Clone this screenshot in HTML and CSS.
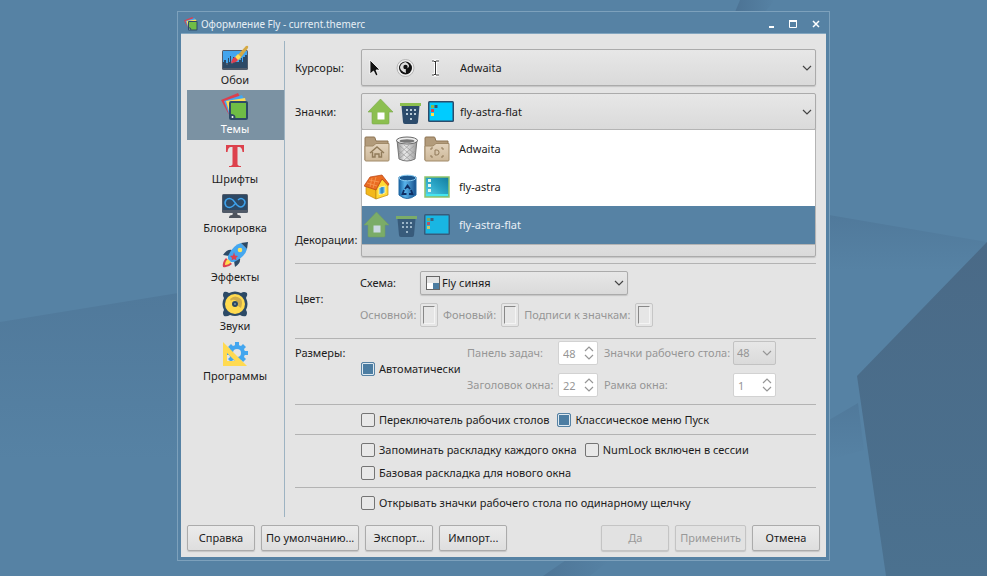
FILE: index.html
```html
<!DOCTYPE html>
<html lang="ru">
<head>
<meta charset="utf-8">
<meta name="viewport" content="width=device-width, initial-scale=1">
<title>Оформление Fly - current.themerc</title>
<link rel="stylesheet" href="styles.css">
</head>
<body>
<svg class="wallpaper" viewBox="0 0 987 576" preserveAspectRatio="none" aria-hidden="true">
  <defs>
    <linearGradient id="w1" x1="0" y1="0" x2="1" y2="0"><stop offset="0" stop-color="#46698a"/><stop offset="1" stop-color="#46698a" stop-opacity="0"/></linearGradient>
    <linearGradient id="w2" x1="0" y1="0" x2="0" y2="1"><stop offset="0" stop-color="#46698a" stop-opacity=".35"/><stop offset="1" stop-color="#46698a" stop-opacity="0"/></linearGradient>
    <linearGradient id="w3" x1="0" y1="0" x2="0" y2="1"><stop offset="0" stop-color="#4a6a87"/><stop offset="1" stop-color="#4b718f"/></linearGradient>
  </defs>
  <rect width="987" height="576" fill="#5682a4"/>
  <path d="M0 322L178 293V460L0 460z" fill="url(#w2)"/>
  <path d="M740 0H775L765 12H735z" fill="url(#w1)" opacity=".6"/>
  <path d="M829 215L987 242L975 270L829 270z" fill="url(#w2)"/>
  <path d="M829 420L858 403L864 450L829 460z" fill="url(#w2)"/>
  <path d="M987 242L857 376L886 576H987z" fill="url(#w3)"/>
  <path d="M566 560L543 576H590L610 560z" fill="url(#w1)" opacity=".5"/>
</svg>

<svg class="defs" aria-hidden="true">
  <defs>
    <linearGradient id="g-fold" x1="0" y1="0" x2="0" y2="1"><stop offset="0" stop-color="#e3d3bd"/><stop offset="1" stop-color="#cdb899"/></linearGradient>
    <linearGradient id="g-bin" x1="0" y1="0" x2="1" y2="0"><stop offset="0" stop-color="#1763a3"/><stop offset=".35" stop-color="#58b4ec"/><stop offset="1" stop-color="#174f8c"/></linearGradient>
    <linearGradient id="g-scr" x1="0" y1="1" x2="1" y2="0"><stop offset="0" stop-color="#5ed4ec"/><stop offset=".5" stop-color="#2ba5c6"/><stop offset="1" stop-color="#127b9d"/></linearGradient>
    <linearGradient id="g-can" x1="0" y1="0" x2="1" y2="0"><stop offset="0" stop-color="#8f8f8f"/><stop offset=".4" stop-color="#ececec"/><stop offset="1" stop-color="#999"/></linearGradient>
    <symbol id="i-themes" viewBox="0 0 28 28">
      <path d="M0 7L17 0L19 4L10 24L7 20z" fill="#dc3f4e"/>
      <path d="M3 8L21 2L23 6L10 24L8 21z" fill="#45a6ef"/>
      <path d="M5 8L24 5L25 9L10 25z" fill="#ffdb55"/>
      <rect x="8" y="8" width="19" height="19" rx="2" fill="#2d4a66"/>
      <path d="M10 10H25V25H14.500C14.500 22 13 21 10 21z" fill="#6fbd45"/>
      <circle cx="11.500" cy="24" r="1" fill="#fff"/>
    </symbol>
    <symbol id="i-home" viewBox="0 0 26 26">
      <path d="M12.500 0L25 13H21V24Q21 25 20 25H5Q4 25 4 24V13H0z" fill="#8cbf50" stroke="#79a84a" stroke-width=".6"/>
      <rect x="9.500" y="13.500" width="7" height="7" fill="#fff"/>
    </symbol>
    <symbol id="i-trash" viewBox="0 0 26 26">
      <rect x="2" y="4" width="21" height="3" fill="#8cbf50"/>
      <path d="M3.500 7H21.500L20 23Q20 25 18 25H7Q5 25 5 23z" fill="#2c4b6b"/>
      <path d="M8 10h2v2h-2zM12 10h2v2h-2zM16 10h2v2h-2zM8 14h2v2h-2zM12 14h2v2h-2zM16 14h2v2h-2zM12 19h2v2h-2z" fill="#b9cbd8"/>
    </symbol>
    <symbol id="i-screen" viewBox="0 0 26 26">
      <rect x="0" y="2" width="26" height="21" rx="1.500" fill="#2c4b6b"/>
      <rect x="1.500" y="3.500" width="23" height="18" fill="#00ccff"/>
      <path d="M3 6h3v3H3z" fill="#8ab84a"/><path d="M6.500 6h3v3H6.500z" fill="#31546f"/>
      <path d="M3 10h3v3H3z" fill="#df4250"/><path d="M3 14h3v3H3z" fill="#ffdf4d"/>
    </symbol>
    <symbol id="i-folder" viewBox="0 0 26 26">
      <path d="M1 24V2Q1 1 2 1H10Q11 1 11 2L12 5H24V24z" fill="#b29b7b" stroke="#8d7555"/>
      <path d="M1 10H9L12 7.500H25V24Q25 25 24 25H2Q1 25 1 24z" fill="url(#g-fold)" stroke="#a18a69"/>
    </symbol>
    <symbol id="i-can" viewBox="0 0 26 26">
      <path d="M3 4L5 23Q13 27 21 23L23 4z" fill="url(#g-can)" stroke="#777"/>
      <path d="M6 10L20 22M10 9L21 18M5 15L16 24M20 10L6 22M15 9L5 18M21 15L10 24" stroke="#999" stroke-width=".7"/>
      <ellipse cx="13" cy="4.500" rx="10.500" ry="3.500" fill="#eee" stroke="#666"/>
      <ellipse cx="13" cy="5" rx="7.500" ry="1.800" fill="#777"/>
    </symbol>
    <symbol id="i-house" viewBox="0 0 26 26">
      <path d="M2 11V20L12 25V13z" fill="#f3b81b" stroke="#c28610" stroke-width=".7"/>
      <path d="M12 25L24 21V10L18 5L12 14z" fill="#ffd936" stroke="#c28610" stroke-width=".7"/>
      <path d="M0 12L6 3L18 1L25 10L24 11.500L18 5L12 16z" fill="#e96b21" stroke="#b84213" stroke-width=".7"/>
      <path d="M5 6L15 8M3 9L13 12M8 4L6 13M12 3L9 14" stroke="#f79b54" stroke-width=".8"/>
      <path d="M15 13.500L21 12V19L15 20.500z" fill="#49a9e3" stroke="#fff4a8"/><path d="M18 13V20" stroke="#2773b1"/>
    </symbol>
    <symbol id="i-bluebin" viewBox="0 0 26 26">
      <path d="M5 3V21Q13 28 22 21V3z" fill="url(#g-bin)" stroke="#246ba5"/>
      <ellipse cx="13.500" cy="4" rx="8.500" ry="2.800" fill="#1c568c" stroke="#8acdf3"/>
      <path d="M11 15L13.500 11.500L16 15M17 16L18.500 20H15M12.500 20H8.500L10 16" fill="none" stroke="#102f64" stroke-width="1.800"/>
    </symbol>
    <symbol id="i-teal" viewBox="0 0 26 26">
      <rect x="1" y="3" width="24" height="20" fill="url(#g-scr)" stroke="#8fc36b" stroke-width="1.500"/>
      <path d="M2 20H24V22H2z" fill="#45e5ee"/>
      <path d="M4 5h3v3H4zM4 10h3v3H4zM4 15h3v3H4z" fill="#e5f7ef"/>
    </symbol>
    <symbol id="i-down" viewBox="0 0 10 10"><path d="M1 3L5 7L9 3" fill="none" stroke="currentColor" stroke-width="1.200"/></symbol>
    <symbol id="i-spin" viewBox="0 0 10 16"><path d="M1 6L5 2L9 6M1 10L5 14L9 10" fill="none" stroke="currentColor" stroke-width="1.200"/></symbol>
  </defs>
</svg>

<main class="window">
  <header class="titlebar">
    <svg class="app-icon" aria-hidden="true"><use href="#i-themes"/></svg>
    <h1>Оформление Fly - current.themerc</h1>
    <div class="winbuttons">
      <button type="button" aria-label="Свернуть"><svg viewBox="0 0 10 10"><path d="M4 8H9" stroke="#fff" stroke-width="2"/></svg></button>
      <button type="button" aria-label="Развернуть"><svg viewBox="0 0 10 10"><path d="M1.500 2V8.500H8.500V2" fill="none" stroke="#fff"/><path d="M1 2H9" stroke="#fff" stroke-width="2"/></svg></button>
      <button type="button" aria-label="Закрыть"><svg viewBox="0 0 10 10"><path d="M2 2L8 8M8 2L2 8" stroke="#fff" stroke-width="1.500"/></svg></button>
    </div>
  </header>

  <form class="client">
    <div class="body">
      <nav class="sidebar">
        <ul>
          <li><a href="#wallpaper">
            <svg viewBox="0 0 28 28" aria-hidden="true"><rect x="1" y="6" width="26" height="20" rx="1.500" fill="#525c6b"/><path d="M2 7H26V19H2z" fill="#43a5ee"/><path d="M2 18H3V16H5V21H7V14H8V18H9V12H10V20H12V13H13V18H18V16H20V14H21V18H22V13H24V11H26V24H2z" fill="#2c4966"/><path d="M15 13L25 2Q28 1 27 4L18 16z" fill="#d5a944"/><path d="M14 13L17 10L20 13L16 17z" fill="#ffdc55"/><path d="M10 19Q11 14 14 13L17 16Q15 19 10 19z" fill="#df3f4d"/></svg>
            <span>Обои</span></a></li>
          <li><a href="#themes" aria-current="page">
            <svg aria-hidden="true"><use href="#i-themes"/></svg>
            <span>Темы</span></a></li>
          <li><a href="#fonts">
            <svg viewBox="0 0 28 28" aria-hidden="true"><path d="M5 2H23V9H21.500Q21 4 18 4H16.500V21Q16.500 23 20 23V24H8V23Q11.500 23 11.500 21V4H10Q7 4 6.500 9H5z" fill="#dd414c"/></svg>
            <span>Шрифты</span></a></li>
          <li><a href="#lock">
            <svg viewBox="0 0 28 28" aria-hidden="true"><path d="M12 20H16L17 25H11z" fill="#4d535d"/><path d="M8 26Q8 23 11 23H17Q20 23 20 26z" fill="#4d535d"/><rect x="1" y="2" width="26" height="19" rx="1.500" fill="#515a68"/><rect x="2" y="3" width="24" height="15" fill="#2d4965"/><path d="M15 11L12 14Q8 17 5 14Q3 11 5 8Q8 5 12 8L16 13Q20 17 23 13Q25 10 23 8Q20 5 17 8" fill="none" stroke="#3ea3ee" stroke-width="1.500"/></svg>
            <span>Блокировка</span></a></li>
          <li><a href="#effects">
            <svg viewBox="0 0 28 28" aria-hidden="true"><path d="M11 9Q6 8 2 14L8 15zM19 17Q20 22 14 26L13 20z" fill="#2d4b68"/><path d="M5 17Q1 21 2 26Q7 27 11 23z" fill="#df4351"/><path d="M7 18Q4 20 4 24Q8 24 10 21z" fill="#ffdd51"/><path d="M7 15Q12 4 20 2L26 8Q24 16 13 21L10 21L7 18z" fill="#45a7ef"/><path d="M20 2L27 1L26 8z" fill="#2c4a67"/><circle cx="19" cy="9" r="2.300" fill="#ffe45c"/><path d="M13 11L14 14.500L17 15L15 17L15.500 19.500L13 18L10.500 19.500L11 17L9 15L12 14.500z" fill="#da4250"/></svg>
            <span>Эффекты</span></a></li>
          <li><a href="#sounds">
            <svg viewBox="0 0 28 28" aria-hidden="true"><path d="M3 2Q5 1 8 3Q14 0 20 3Q23 1 26 3Q27 5 25 8Q28 14 25 20Q27 23 25 26Q22 27 19 25Q14 27 9 25Q6 27 3 26Q1 23 3 20Q0 14 3 8Q1 5 3 2z" fill="#2c4a66"/><circle cx="14" cy="14" r="10" fill="#ffdb50"/><path d="M9 9Q14 4 20 9Q22 12 20 18L17 16Q18 12 14 10Q11 9 10 11z" fill="#cfad4c"/><circle cx="14" cy="14" r="3" fill="#2b4965"/><circle cx="14" cy="14" r="1" fill="#8094a4"/></svg>
            <span>Звуки</span></a></li>
          <li><a href="#programs">
            <svg viewBox="0 0 28 28" aria-hidden="true"><g fill="#43a6ef"><circle cx="16" cy="13" r="8"/><path d="M14 2h4v22h-4zM5 11h22v4H5zM7 7L10 4L25 19L22 22zM22 4L25 7L10 22L7 19z"/></g><circle cx="16" cy="13" r="4" fill="#e4e4e4"/><path fill-rule="evenodd" d="M2 2L26 26H2zM6 13V21H14z" fill="#ffda51"/></svg>
            <span>Программы</span></a></li>
        </ul>
      </nav>

      <section class="settings">
        <div class="row tall">
          <label for="cursors">Курсоры:</label>
          <div class="combo rich">
            <select id="cursors"><option>Adwaita</option></select>
            <svg class="strip" viewBox="0 0 90 30" aria-hidden="true"><path d="M5 7V21L8.500 18L11 23L13 22L11 17H15z" fill="#111" stroke="#fff" stroke-width=".8"/><circle cx="40.500" cy="15" r="8.500" fill="#eee" stroke="#aaa" stroke-width=".8"/><circle cx="40.500" cy="15" r="6.500" fill="#111"/><path d="M40.500 9Q46 12 43 15Q40 15 41 20Q35 18 35 14Q36 10 40.500 9z" fill="#ddd"/><circle cx="40.500" cy="14" r="2.200" fill="#111"/><path d="M67 8H69L70 9L71 8H74M67 22H69L70 21L71 22H74M70.500 9V21" fill="none" stroke="#fff" stroke-width="3"/><path d="M67 8H69L70 9L71 8H74M67 22H69L70 21L71 22H74M70.500 9V21" fill="none" stroke="#333" stroke-width="1"/></svg>
            <svg class="arrow" aria-hidden="true"><use href="#i-down"/></svg>
          </div>
        </div>

        <div class="row tall">
          <label for="icons">Значки:</label>
          <div class="combo rich open">
            <select id="icons"><option>fly-astra-flat</option></select>
            <span class="icons" aria-hidden="true"><svg><use href="#i-home"/></svg><svg><use href="#i-trash"/></svg><svg><use href="#i-screen"/></svg></span>
            <svg class="arrow" aria-hidden="true"><use href="#i-down"/></svg>
            <ul class="popup" role="listbox" aria-label="Значки">
              <li role="option" aria-selected="false"><span class="icons" aria-hidden="true"><svg viewBox="0 0 26 26"><use href="#i-folder"/><path d="M6 17L13 11L20 17M8.500 16V21H11V18H15V21H17.500V16" fill="none" stroke="#917b5a" stroke-width="1.400"/></svg><svg><use href="#i-can"/></svg><svg viewBox="0 0 26 26"><use href="#i-folder"/><path d="M7 14V12H9M17 12H19V14M7 19V21H9M17 21H19V19M11 14V19H13Q15 19 15 16.500Q15 14 13 14z" fill="none" stroke="#917b5a" stroke-width="1"/></svg></span>Adwaita</li>
              <li role="option" aria-selected="false"><span class="icons" aria-hidden="true"><svg><use href="#i-house"/></svg><svg><use href="#i-bluebin"/></svg><svg><use href="#i-teal"/></svg></span>fly-astra</li>
              <li role="option" aria-selected="true"><span class="icons" aria-hidden="true"><svg><use href="#i-home"/></svg><svg><use href="#i-trash"/></svg><svg><use href="#i-screen"/></svg></span>fly-astra-flat</li>
            </ul>
          </div>
        </div>

        <div class="row decor">
          <label for="decor">Декорации:</label>
          <div class="combo"><select id="decor"><option></option></select></div>
        </div>

        <hr>

        <div class="row color">
          <span>Цвет:</span>
          <div class="stack">
            <div class="line">
              <label class="scheme-label" for="scheme">Схема:</label>
              <div class="combo scheme">
                <select id="scheme"><option>Fly синяя</option></select>
                <svg class="swatch" viewBox="0 0 14 14" aria-hidden="true"><rect width="14" height="14" fill="#666"/><path d="M1 1H13V7H1z" fill="#e4e4e4"/><path d="M1 7H7V13H1z" fill="#fff"/><path d="M7 7H13V13H7z" fill="#4c7ca0"/></svg>
                <svg class="arrow" aria-hidden="true"><use href="#i-down"/></svg>
              </div>
            </div>
            <div class="line off">
              <label class="scheme-label" for="c1">Основной:</label><button id="c1" class="pick" type="button" disabled><i></i></button>
              <label for="c2">Фоновый:</label><button id="c2" class="pick" type="button" disabled><i></i></button>
              <label for="c3">Подписи к значкам:</label><button id="c3" class="pick" type="button" disabled><i></i></button>
            </div>
          </div>
        </div>

        <hr>

        <div class="row sizes">
          <span class="sizes-title">Размеры:</span>
          <label class="check"><input type="checkbox" checked>Автоматически</label>
          <div class="grid off">
            <label for="panel">Панель задач:</label>
            <span class="spin"><input id="panel" type="number" value="48" disabled><svg aria-hidden="true"><use href="#i-spin"/></svg></span>
            <label class="second" for="desk">Значки рабочего стола:</label>
            <div class="combo small"><select id="desk" disabled><option>48</option></select><svg class="arrow" aria-hidden="true"><use href="#i-down"/></svg></div>
            <label for="caption">Заголовок окна:</label>
            <span class="spin"><input id="caption" type="number" value="22" disabled><svg aria-hidden="true"><use href="#i-spin"/></svg></span>
            <label class="second" for="frame">Рамка окна:</label>
            <span class="spin"><input id="frame" type="number" value="1" disabled><svg aria-hidden="true"><use href="#i-spin"/></svg></span>
          </div>
        </div>

        <hr>
        <div class="checks">
          <label class="check"><input type="checkbox">Переключатель рабочих столов</label>
          <label class="check"><input type="checkbox" checked>Классическое меню Пуск</label>
        </div>
        <hr>
        <div class="checks">
          <label class="check"><input type="checkbox">Запоминать раскладку каждого окна</label>
          <label class="check"><input type="checkbox">NumLock включен в сессии</label>
          <label class="check whole"><input type="checkbox">Базовая раскладка для нового окна</label>
        </div>
        <hr>
        <div class="checks">
          <label class="check"><input type="checkbox">Открывать значки рабочего стола по одинарному щелчку</label>
        </div>
      </section>
    </div>

    <footer class="actions">
      <button type="button">Справка</button>
      <button type="button">По умолчанию...</button>
      <button type="button">Экспорт...</button>
      <button type="button">Импорт...</button>
      <button class="push" type="button" disabled>Да</button>
      <button type="button" disabled>Применить</button>
      <button type="button">Отмена</button>
    </footer>
  </form>
</main>
</body>
</html>
```

FILE: styles.css
```css
* { box-sizing: border-box; }

body {
  margin: 0;
  min-height: 100vh;
  display: flex;
  padding: 11px 157px 15px 177px;
  background: #5682a4;
  font: 11px/16px "Noto Sans", "Open Sans", sans-serif;
  color: #1c1c1c;
}

button, select, input { font: inherit; color: inherit; margin: 0; }
label { white-space: nowrap; }
ul { list-style: none; margin: 0; padding: 0; }
svg { display: block; flex: none; }
.defs { position: absolute; width: 0; height: 0; }

.wallpaper {
  position: absolute;
  inset: 0;
  width: 100%;
  height: 100%;
}

.window {
  position: relative;
  flex: 1;
  min-width: 640px;
  display: flex;
  flex-direction: column;
  padding: 0 3px 3px;
  border: 1px solid #7da1bc;
  background: #5682a4;
}

.titlebar {
  display: flex;
  align-items: center;
  height: 22px;
  padding: 2px 4px 0 3px;
  gap: 3px;
  border-bottom: 1px solid #82a6c0;
}
.titlebar h1 {
  flex: 1;
  margin: 0;
  font-size: 10px;
  font-weight: 400;
  color: #e6eef4;
}
.app-icon { width: 14px; height: 14px; }
.winbuttons { display: flex; gap: 10px; }
.winbuttons button { width: 13px; height: 14px; padding: 0; border: 0; background: none; }
.winbuttons svg { width: 10px; height: 10px; margin: auto; }

.client {
  flex: 1;
  display: flex;
  flex-direction: column;
  background: #e4e4e4;
}
.body { flex: 1; display: flex; padding: 7px 10px 0 6px; }

.sidebar {
  flex: none;
  width: 98px;
  border-right: 1px solid #9db3c2;
}
.sidebar ul { display: grid; grid-auto-rows: 1fr; height: 345px; }
.sidebar a {
  display: flex;
  flex-direction: column;
  align-items: center;
  height: 100%;
  padding: 3px 1px 0 0;
  color: inherit;
  text-decoration: none;
}
.sidebar a[aria-current] { background: #7b92a3; color: #fff; }
.sidebar svg { width: 28px; height: 28px; }

.settings { flex: 1; padding: 8px 0 0 10px; }
hr { margin: 0; border: 0; height: 1px; background: #b3b3b3; }

.row { display: grid; grid-template-columns: 66px 1fr; align-items: center; }
.row.tall { margin-bottom: 7px; }
.row.decor { margin: 92px 0 6px; }
.row.color { grid-template-columns: 65px 1fr; padding: 7px 0 11px; }

.combo { position: relative; display: flex; align-items: center; height: 24px; color: #1c1c1c; }
.combo select {
  appearance: none;
  width: 100%;
  height: 100%;
  padding: 0 24px 0 6px;
  border: 1px solid #ababab;
  border-radius: 2px;
  background: linear-gradient(#e7e7e7, #dadada);
  box-shadow: 0 1px 1px #c4c4c4;
}
.arrow { position: absolute; right: 4px; width: 10px; height: 10px; color: #444; pointer-events: none; }
.tall .combo { height: 37px; }
.decor .combo { height: 35px; }
.rich select { padding-left: 98px; }
.strip { position: absolute; left: 4px; width: 90px; height: 30px; pointer-events: none; }
.icons { display: flex; gap: 4px; margin-right: 9px; }
.icons svg { width: 26px; height: 26px; }
.combo > .icons { position: absolute; left: 7px; pointer-events: none; }

.popup {
  position: absolute;
  z-index: 2;
  top: 36px;
  left: 0;
  right: 0;
  border: 1px solid #b4b4b4;
  background: #fff;
}
.popup li { display: flex; align-items: center; height: 38px; padding-left: 2px; }
.popup li[aria-selected="true"] { background: #5682a4; color: #e8eff5; }
.popup li[aria-selected="true"] .icons { opacity: .7; }

.off { color: #969696; }
.stack { display: grid; gap: 8px; }
.line { display: flex; align-items: center; gap: 6px; height: 24px; }
.line.off { gap: 5px; }
.scheme-label { width: 54px; }
.off .scheme-label { width: 55px; }
.line .scheme { width: 208px; }
.scheme select { padding-left: 21px; }
.swatch { position: absolute; left: 6px; width: 14px; height: 14px; pointer-events: none; }
.pick {
  width: 18px;
  height: 24px;
  padding: 2px;
  border: 1px solid #c6c6c6;
  border-radius: 2px;
  background: #e6e6e6;
}
.pick i { display: block; height: 18px; border: 1px solid #f4f4f4; border-top-color: #888; border-left-color: #888; }

.row.sizes { grid-template-columns: 66px 106px 1fr; padding: 2px 0 7px; }
.sizes-title { align-self: start; line-height: 24px; }
.grid { display: grid; grid-template-columns: 91px 40px 135px 43px; gap: 8px 0; align-items: center; }
.grid .second { padding-left: 6px; }
.small { color: #969696; }
.small .arrow { color: inherit; }
.small select { padding-left: 3px; border-color: #c2c2c2; opacity: 1; box-shadow: none; }
.spin { position: relative; display: flex; align-items: center; height: 24px; }
.spin input {
  appearance: textfield;
  width: 100%;
  height: 100%;
  padding: 0 4px;
  border: 1px solid #d2d2d2;
  border-radius: 2px;
  background: #fff;
}
.spin input::-webkit-inner-spin-button { appearance: none; }
.spin svg { position: absolute; right: 4px; width: 10px; height: 16px; }

.checks { display: flex; flex-wrap: wrap; column-gap: 8px; padding: 3px 0 3px 66px; }
.check { display: flex; align-items: center; gap: 4px; height: 23px; }
.check.whole { flex-basis: 100%; }
.check input {
  flex: none;
  appearance: none;
  width: 14px;
  height: 14px;
  border: 1px solid #747474;
  border-radius: 2px;
  background: #e8e8e8;
}
.check input:checked { border-color: #5682a4; background: #4c7da2; box-shadow: inset 0 0 0 1px #dfe9f0; }

.actions { display: flex; gap: 6px; padding: 8px 6px 6px; }
.actions button {
  min-width: 68px;
  height: 26px;
  padding: 0 4px;
  border: 1px solid #ababab;
  border-radius: 2px;
  background: linear-gradient(#ebebeb, #dedede);
  box-shadow: 0 1px 1px #c4c4c4;
}
.actions button:disabled { color: #999; border-color: #c4c4c4; background: #e2e2e2; }
.actions .push { margin-left: auto; }
```
